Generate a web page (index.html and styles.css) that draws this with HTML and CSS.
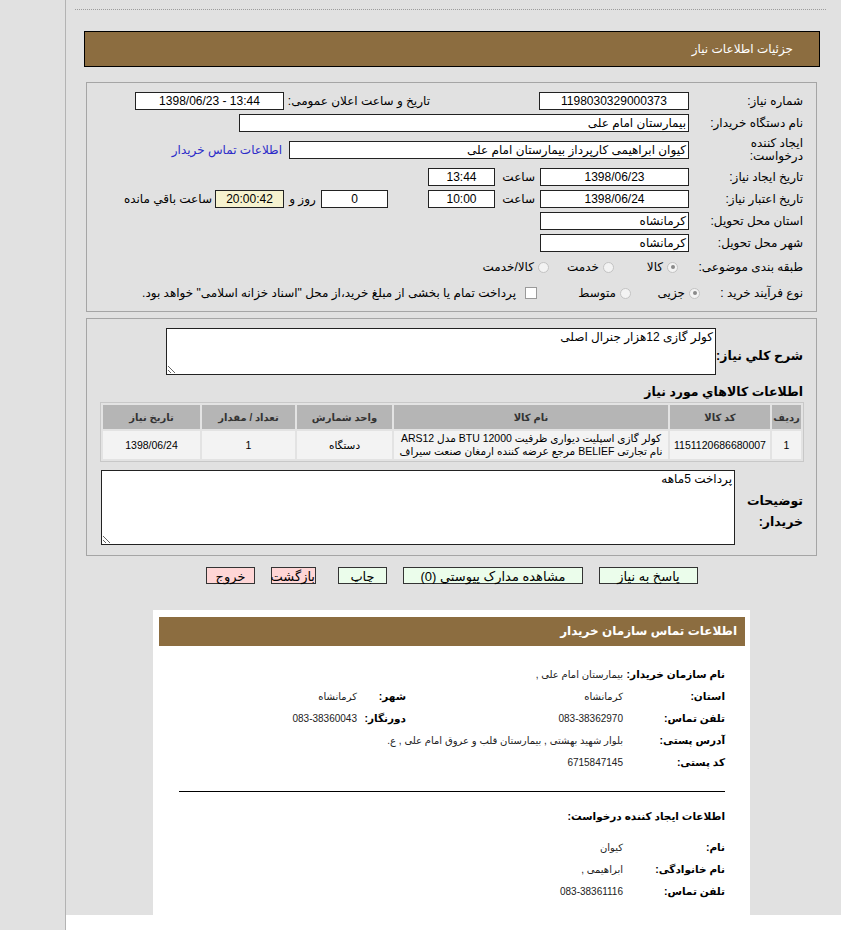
FILE: index.html
```html
<!DOCTYPE html>
<html lang="fa">
<head>
<meta charset="utf-8">
<title>جزئیات اطلاعات نیاز</title>
<link rel="stylesheet" href="styles.css">
</head>
<body>
<div class="page">
  <div class="side"></div>
  <div class="main">
    <div class="dots"></div>
    <div class="titlebar">جزئیات اطلاعات نیاز</div>

    <div class="panel p1">
      <div class="row">
        <div class="lbl">شماره نیاز:</div>
        <div class="box w150 c">1198030329000373</div>
        <div class="lbl2">تاریخ و ساعت اعلان عمومی:</div>
        <div class="box w149 c ltr">1398/06/23 - 13:44</div>
      </div>
      <div class="row">
        <div class="lbl">نام دستگاه خریدار:</div>
        <div class="box w450">بیمارستان امام علی</div>
      </div>
      <div class="row tall">
        <div class="lbl two">ایجاد کننده<br>درخواست:</div>
        <div class="box w400">کیوان ابراهیمی کارپرداز بیمارستان امام علی</div>
        <a class="link" href="#">اطلاعات تماس خریدار</a>
      </div>
      <div class="row">
        <div class="lbl">تاریخ ایجاد نیاز:</div>
        <div class="box w149 c">1398/06/23</div>
        <div class="saat">ساعت</div>
        <div class="box w67 c">13:44</div>
      </div>
      <div class="row">
        <div class="lbl">تاریخ اعتبار نیاز:</div>
        <div class="box w149 c">1398/06/24</div>
        <div class="saat">ساعت</div>
        <div class="box w67 c">10:00</div>
        <div class="box w67 c days">0</div>
        <div class="ruz">روز و</div>
        <div class="box w69 c remain">20:00:42</div>
        <div class="rest">ساعت باقي مانده</div>
      </div>
      <div class="row">
        <div class="lbl">استان محل تحویل:</div>
        <div class="box w149">کرمانشاه</div>
      </div>
      <div class="row">
        <div class="lbl">شهر محل تحویل:</div>
        <div class="box w149">کرمانشاه</div>
      </div>
      <div class="row opts">
        <div class="lbl">طبقه بندی موضوعی:</div>
        <div class="opt o1"><span class="radio on"></span><span>کالا</span></div>
        <div class="opt o2"><span class="radio"></span><span>خدمت</span></div>
        <div class="opt"><span class="radio"></span><span>کالا/خدمت</span></div>
      </div>
      <div class="row opts">
        <div class="lbl lbl9">نوع فرآیند خرید :</div>
        <div class="opt p1o"><span class="radio on"></span><span>جزیی</span></div>
        <div class="opt p2o"><span class="radio"></span><span>متوسط</span></div>
        <div class="opt chk"><span class="checkbox"></span><span>پرداخت تمام یا بخشی از مبلغ خرید،از محل "اسناد خزانه اسلامی" خواهد بود.</span></div>
      </div>
    </div>

    <div class="panel p2">
      <div class="descrow">
        <div class="blbl">شرح كلي نياز:</div>
        <textarea class="ta ta1" readonly>کولر گازی 12هزار جنرال اصلی</textarea>
      </div>
      <div class="heading">اطلاعات كالاهاي مورد نياز</div>
      <table class="items">
        <colgroup>
          <col class="k1"><col class="k2"><col class="k3"><col class="k4"><col class="k5"><col class="k6">
        </colgroup>
        <thead>
          <tr><th>ردیف</th><th>کد کالا</th><th>نام کالا</th><th>واحد شمارش</th><th>تعداد / مقدار</th><th>تاریخ نیاز</th></tr>
        </thead>
        <tbody>
          <tr>
            <td>1</td>
            <td>1151120686680007</td>
            <td class="name">کولر گازی اسپلیت دیواری ظرفیت 12000 BTU مدل ARS12<br>نام تجارتی BELIEF مرجع عرضه کننده ارمغان صنعت سیراف</td>
            <td>دستگاه</td>
            <td>1</td>
            <td>1398/06/24</td>
          </tr>
        </tbody>
      </table>
      <div class="descrow notes">
        <div class="blbl two">توضیحات<br>خریدار:</div>
        <textarea class="ta ta2" readonly>پرداخت 5ماهه</textarea>
      </div>
    </div>

    <div class="buttons">
      <div class="btn green b1">پاسخ به نیاز</div>
      <div class="btn green b2">مشاهده مدارک پیوستي (0)</div>
      <div class="btn green b3">چاپ</div>
      <div class="btn pink b4">بازگشت</div>
      <div class="btn pink b5">خروج</div>
    </div>

    <div class="contact">
      <div class="chead">اطلاعات تماس سازمان خریدار</div>
      <div class="cbody">
        <div class="crow first">
          <div class="cl">نام سازمان خریدار:</div>
          <div class="cv">بیمارستان امام علی ,</div>
        </div>
        <div class="crow">
          <div class="cl">استان:</div>
          <div class="cv">کرمانشاه</div>
          <div class="cl2">شهر:</div>
          <div class="cv2">کرمانشاه</div>
        </div>
        <div class="crow">
          <div class="cl">تلفن تماس:</div>
          <div class="cv">083-38362970</div>
          <div class="cl2">دورنگار:</div>
          <div class="cv2">083-38360043</div>
        </div>
        <div class="crow">
          <div class="cl">آدرس پستی:</div>
          <div class="cv wide">بلوار شهید بهشتی , بیمارستان قلب و عروق امام علی , ع.</div>
        </div>
        <div class="crow">
          <div class="cl">کد پستی:</div>
          <div class="cv">6715847145</div>
        </div>
        <div class="rule"></div>
        <div class="crow sub">
          <div class="cl widecl">اطلاعات ایجاد کننده درخواست:</div>
        </div>
        <div class="crow first2">
          <div class="cl">نام:</div>
          <div class="cv">کیوان</div>
        </div>
        <div class="crow">
          <div class="cl">نام خانوادگی:</div>
          <div class="cv">ابراهیمی ,</div>
        </div>
        <div class="crow">
          <div class="cl">تلفن تماس:</div>
          <div class="cv">083-38361116</div>
        </div>
      </div>
    </div>
  </div>
</div>
</body>
</html>
```

FILE: styles.css
```css
* { box-sizing: border-box; }
html, body { margin: 0; padding: 0; }
body {
  background: #ffffff;
  font-family: "Liberation Sans", "DejaVu Sans", sans-serif;
  font-size: 12px;
  color: #000;
}
.page { display: flex; height: 930px; overflow: hidden; }
.side {
  width: 66px; flex: none; height: 930px;
  background: #e1e1e1; border-right: 1px solid #b3b3b3;
}
.main {
  width: 775px; flex: none; height: 915px;
  background: #e1e1e1; padding-top: 9px;
}
.dots { margin: 0 15px 0 9px; border-top: 1px dotted #9c9c9c; }
.titlebar {
  margin: 21px 21px 0 18px; height: 36px;
  background: #8c6d40; border: 1px solid #000;
  color: #fff; font-size: 12px; line-height: 34px;
  padding-right: 26px; direction: rtl;
}
.panel { margin: 15px 24px 0 20px; border: 1px solid #a5a5a5; direction: rtl; }
.p1 { padding: 7px 13px 5px 0; }
.row { display: flex; align-items: center; height: 22px; white-space: nowrap; }
.row.tall { height: 32px; }
.row.opts { height: 26px; }
.lbl { width: 114px; flex: none; }
.lbl.two { line-height: 13px; }
.lbl9 { width: 103px; }
.lbl2 { width: 146px; flex: none; margin-right: 109px; }
.box {
  height: 18px; flex: none; background: #fff; border: 1px solid #222;
  line-height: 16px; padding: 0 2px; overflow: hidden; white-space: nowrap;
}
.box.c { text-align: center; }
.ltr { direction: ltr; }
.w150 { width: 150px; }
.w149 { width: 149px; }
.w450 { width: 450px; }
.w400 { width: 400px; }
.w67 { width: 67px; }
.w69 { width: 69px; }
.days { margin-right: 40px; }
.remain { background: #f6f2cf; }
.saat { width: 45px; flex: none; padding-right: 5px; }
.ruz { width: 37px; flex: none; text-align: center; }
.rest { margin-right: 3px; }
.link { margin-right: 7px; color: #2b2bc8; text-decoration: none; }
.opt { display: flex; align-items: center; gap: 4px; flex: none; }
.o1 { margin-right: 11px; width: 64px; }
.o2 { width: 65px; }
.p1o { width: 69px; }
.p2o { width: 93px; }
.chk { gap: 9px; margin-right: 1px; }
.radio {
  width: 11px; height: 11px; border-radius: 50%; flex: none;
  border: 1px solid #c3c3c3; background: #f3f3f3; position: relative;
}
.radio.on::after {
  content: ""; position: absolute; left: 2.5px; top: 2.5px;
  width: 4px; height: 4px; border-radius: 50%; background: #8a8a8a;
}
.checkbox {
  width: 12px; height: 12px; flex: none;
  border: 1px solid #9a9a9a; background: #fff;
}

.p2 { margin-top: 6px; padding: 9px 13px 10px 14px; }
.descrow { display: flex; align-items: center; }
.blbl {
  width: 87px; flex: none; font-weight: bold; font-size: 12.5px;
  padding-top: 7px; white-space: nowrap;
}
.blbl.two { width: 68px; line-height: 21px; padding-top: 8px; }
.ta {
  display: block; flex: none; background: #fff; border: 1px solid #222;
  font-family: "Liberation Sans", "DejaVu Sans", sans-serif; font-size: 12px;
  padding: 1px 2px; margin: 0; resize: both; direction: rtl; color: #000;
}
.ta1 { width: 550px; height: 47px; }
.ta2 { width: 634px; height: 75px; }
.heading { font-weight: bold; font-size: 12.5px; line-height: 18px; margin-top: 8px; margin-bottom: 1px; }
.items {
  width: 704px; table-layout: fixed; border-collapse: separate; border-spacing: 2px;
  border: 1px solid #c8c8c8; background: #e3e3e3; margin-right: -1px;
  font-size: 10.5px;
}
.items col.k1 { width: 29px; }
.items col.k2 { width: 100px; }
.items col.k3 { width: 274px; }
.items col.k4 { width: 95px; }
.items col.k5 { width: 93px; }
.items col.k6 { width: 97px; }
.items th {
  height: 24px; background: #b5b5b5; color: #333; font-weight: bold;
  padding: 0; text-align: center; font-size: 10px; white-space: nowrap;
}
.items td {
  height: 28px; background: #f3f3f3; text-align: center; padding: 0;
  line-height: 13px; white-space: nowrap; overflow: hidden;
}
.items td.name { font-size: 10.5px; }
.notes { margin-top: 8px; }

.buttons {
  display: flex; direction: rtl; gap: 16px;
  margin: 11px 143px 0 0;
}
.btn {
  height: 17px; flex: none; border: 1px solid #333; text-align: center;
  font-size: 13px; line-height: 17px; color: #000;
}
.green { background: #ebfdeb; }
.pink { background: #ffd6d6; }
.b1 { width: 99px; }
.b2 { width: 180px; }
.b3 { width: 49px; margin-left: 6px; }
.b4 { width: 45px; }
.b5 { width: 49px; }

.contact {
  margin: 26px 0 0 87px; width: 597px; height: 305px;
  background: #fff; direction: rtl; padding-top: 7px;
}
.chead {
  margin: 0 5px 0 6px; height: 29px; background: #8c6d40;
  color: #fff; font-weight: bold; font-size: 12px; line-height: 29px;
  padding-right: 8px;
}
.cbody { padding: 0 25px 0 26px; }
.crow { display: flex; align-items: center; height: 22px; white-space: nowrap; }
.crow.first { margin-top: 17px; }
.crow.sub { margin-top: 13px; }
.crow.first2 { margin-top: 9px; }
.cl { width: 102px; flex: none; font-weight: bold; font-size: 10.5px; }
.cv { width: 217px; flex: none; font-size: 10px; color: #222; }
.cv.wide { width: auto; }
.cl.widecl { width: auto; }
.cl2 { width: 49px; flex: none; font-weight: bold; font-size: 10.5px; }
.cv2 { font-size: 10px; color: #222; }
.rule { margin-top: 18px; border-top: 1px solid #000; }
```
